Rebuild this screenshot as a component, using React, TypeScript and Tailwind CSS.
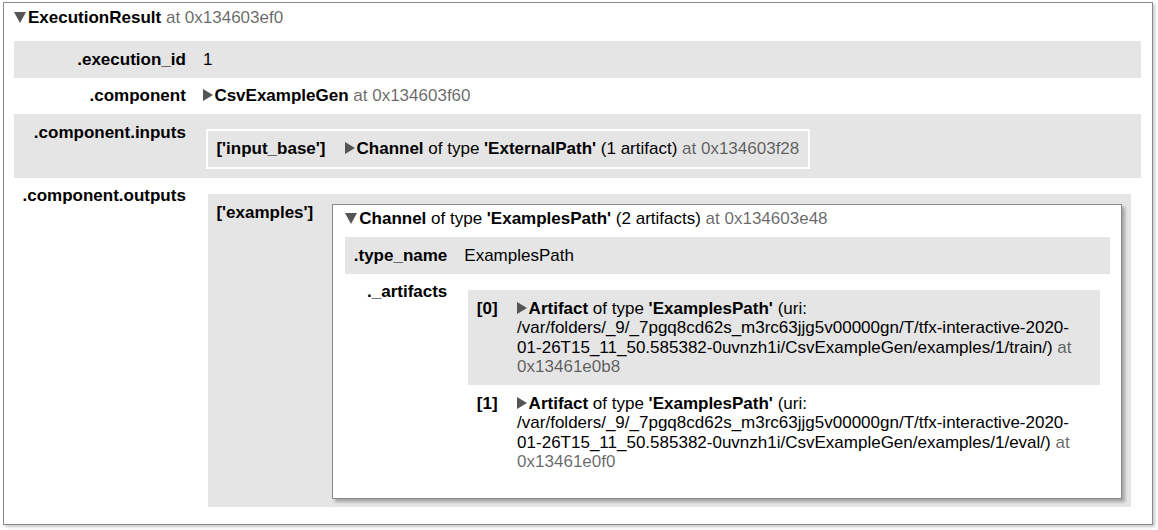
import React from 'react';

const GRAY = 'bg-[#e5e5e5]';

function Down() {
  return (
    <svg width="12" height="11" viewBox="0 0 12 11" className="inline-block align-[0px] mr-[2px]">
      <path d="M0 0H12L6 11Z" fill="#555" />
    </svg>
  );
}

function Right() {
  return (
    <svg width="10" height="12" viewBox="0 0 10 12" className="inline-block align-[0px] mr-[1.5px]">
      <path d="M0 0L10 6L0 12Z" fill="#555" />
    </svg>
  );
}

function Dim({ children }: { children: React.ReactNode }) {
  return <span className="text-black/60">{children}</span>;
}

const labelCell = 'align-top text-right font-bold whitespace-nowrap w-[1%] p-[8.5px]';
const valueCell = 'align-top text-left p-[8.5px]';
const keyCellFull = 'align-top text-left font-bold whitespace-nowrap w-[1%] p-[8.5px]';
const keyCell = 'align-top text-left font-bold whitespace-nowrap p-[8.5px]';

export default function App() {
  return (
    <div className="w-[1158px] h-[530px] bg-white overflow-hidden pt-[2px] pl-[3px] font-['Liberation_Sans',Arial,sans-serif] text-[17px] leading-[19.5px] text-black">
      <div className="w-[1150px] border border-[#8a8a8a] bg-white shadow-[2px_2px_3px_rgba(0,0,0,0.22)] pt-[5px] pb-[6.5px] pl-[10px] pr-[11px]">
        <div className="whitespace-nowrap">
          <Down />
          <b>ExecutionResult</b> <Dim>at 0x134603ef0</Dim>
        </div>
        <table className="mt-[13.5px] w-full border-separate border-spacing-0">
          <tbody>
            <tr className={GRAY}>
              <td className={labelCell}>.execution_id</td>
              <td className={valueCell}>1</td>
            </tr>
            <tr className="bg-white">
              <td className={labelCell}>.component</td>
              <td className={valueCell}>
                <Right />
                <b>CsvExampleGen</b> <Dim>at 0x134603f60</Dim>
              </td>
            </tr>
            <tr className={GRAY}>
              <td className={labelCell}>.component.inputs</td>
              <td className={valueCell}>
                <table className="ml-[3px] mt-[6px] border-2 border-white border-separate border-spacing-0">
                  <tbody>
                    <tr className={GRAY}>
                      <td className={keyCell}>{"['input_base']"}</td>
                      <td className={valueCell + ' whitespace-nowrap pl-[11px]'}>
                        <Right />
                        <b>Channel</b> of type <b>{"'ExternalPath'"}</b> (1 artifact) <Dim>at 0x134603f28</Dim>
                      </td>
                    </tr>
                  </tbody>
                </table>
              </td>
            </tr>
            <tr className="bg-white">
              <td className={labelCell}>.component.outputs</td>
              <td className={valueCell}>
                <table className="ml-[3px] mt-[6px] w-[calc(100%-3px)] border-2 border-white border-separate border-spacing-0">
                  <tbody>
                    <tr className={GRAY}>
                      <td className={keyCellFull}>{"['examples']"}</td>
                      <td className={valueCell + ' pl-[10.5px]'}>
                        <div className="mt-[1.5px] border border-[#8a8a8a] bg-white shadow-[3px_3px_3px_rgba(0,0,0,0.28)] pt-[4px] pb-[7px] pl-[12px] pr-[11px]">
                          <div className="whitespace-nowrap">
                            <Down />
                            <b>Channel</b> of type <b>{"'ExamplesPath'"}</b> (2 artifacts) <Dim>at 0x134603e48</Dim>
                          </div>
                          <table className="mt-[8.5px] w-full border-separate border-spacing-0">
                            <tbody>
                              <tr className={GRAY}>
                                <td className={labelCell}>.type_name</td>
                                <td className={valueCell}>ExamplesPath</td>
                              </tr>
                              <tr className="bg-white">
                                <td className={labelCell}>._artifacts</td>
                                <td className={valueCell}>
                                  <table className="ml-[2px] mt-[6px] w-[calc(100%-2px)] border-2 border-white border-separate border-spacing-0">
                                    <tbody>
                                      <tr className={GRAY}>
                                        <td className={keyCellFull}>[0]</td>
                                        <td className={valueCell + ' whitespace-nowrap pl-[11px]'}>
                                          <Right />
                                          <b>Artifact</b> of type <b>{"'ExamplesPath'"}</b> (uri:
                                          <br />
                                          /var/folders/_9/_7pgq8cd62s_m3rc63jjg5v00000gn/T/tfx-interactive-2020-
                                          <br />
                                          01-26T15_11_50.585382-0uvnzh1i/CsvExampleGen/examples/1/train/){' '}
                                          <Dim>at</Dim>
                                          <br />
                                          <Dim>0x13461e0b8</Dim>
                                        </td>
                                      </tr>
                                      <tr className="bg-white">
                                        <td className={keyCellFull}>[1]</td>
                                        <td className={valueCell + ' whitespace-nowrap pl-[11px]'}>
                                          <Right />
                                          <b>Artifact</b> of type <b>{"'ExamplesPath'"}</b> (uri:
                                          <br />
                                          /var/folders/_9/_7pgq8cd62s_m3rc63jjg5v00000gn/T/tfx-interactive-2020-
                                          <br />
                                          01-26T15_11_50.585382-0uvnzh1i/CsvExampleGen/examples/1/eval/){' '}
                                          <Dim>at</Dim>
                                          <br />
                                          <Dim>0x13461e0f0</Dim>
                                        </td>
                                      </tr>
                                    </tbody>
                                  </table>
                                </td>
                              </tr>
                            </tbody>
                          </table>
                        </div>
                      </td>
                    </tr>
                  </tbody>
                </table>
              </td>
            </tr>
          </tbody>
        </table>
      </div>
    </div>
  );
}
